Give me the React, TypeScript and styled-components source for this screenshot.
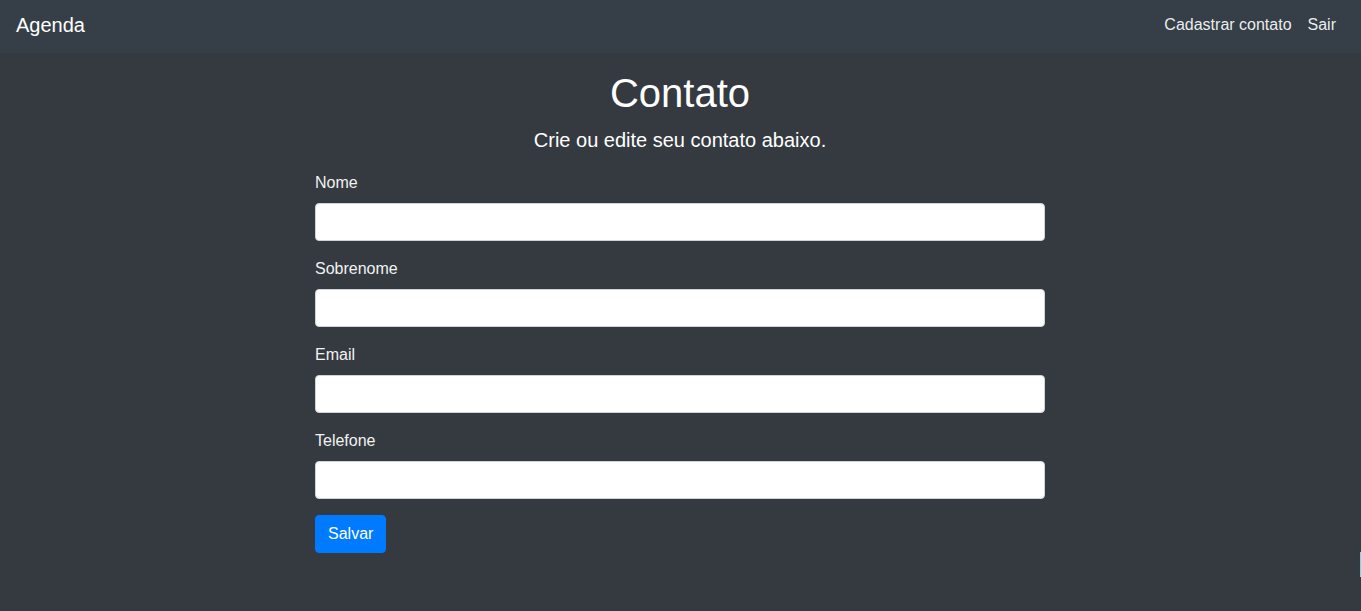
import React from "react";
import styled, { createGlobalStyle } from "styled-components";

const Global = createGlobalStyle`
  html, body { margin: 0; padding: 0; }
  body {
    background: #343a40;
    font-family: "Liberation Sans", Arial, sans-serif;
    font-size: 16px;
    line-height: 1.5;
    color: #fff;
    min-height: 611px;
    overflow: hidden;
  }
  * { box-sizing: border-box; }
`;

const Page = styled.div`
  position: relative;
  min-height: 611px;
`;

const Navbar = styled.nav`
  height: 53px;
  background: #363f48;
  display: flex;
  align-items: center;
  justify-content: space-between;
  padding: 0 17px 0 16px;
`;

const Brand = styled.a`
  font-size: 20px;
  line-height: 30px;
  color: #fff;
  text-decoration: none;
  margin-top: -3px;
`;

const NavLinks = styled.div`
  display: flex;
  margin-top: -3px;
`;

const NavLink = styled.a`
  font-size: 16px;
  line-height: 24px;
  padding: 0 8px;
  color: rgba(255, 255, 255, 0.92);
  text-decoration: none;
`;

const Main = styled.main`
  width: 731px;
  margin: 0 auto;
  padding: 16px 1px 0 0;
`;

const Title = styled.h1`
  margin: 0 0 8px;
  font-size: 40px;
  font-weight: 400;
  line-height: 48px;
  text-align: center;
`;

const Lead = styled.p`
  margin: 0 0 16px;
  font-size: 20px;
  line-height: 30px;
  text-align: center;
`;

const Form = styled.form`
  display: flex;
  flex-direction: column;
`;

const Group = styled.div`
  display: flex;
  flex-direction: column;
  margin-bottom: 16px;
`;

const Label = styled.label`
  font-size: 16px;
  line-height: 24px;
  margin-bottom: 8px;
  color: #f2f2f2;
`;

const Input = styled.input`
  height: 38px;
  width: 100%;
  border: 1px solid #ced4da;
  border-radius: 4px;
  background: #fff;
  padding: 6px 12px;
  font-size: 16px;
  font-family: inherit;
`;

const Button = styled.button`
  align-self: flex-start;
  height: 38px;
  padding: 6px 12px;
  background: #007bff;
  border: 1px solid #007bff;
  border-radius: 4px;
  color: #fff;
  font-size: 16px;
  line-height: 24px;
  font-family: inherit;
`;

const EdgeMark = styled.div`
  position: absolute;
  right: 0;
  top: 552px;
  width: 1px;
  height: 25px;
  background: #7fd8e8;
`;

const fields = ["Nome", "Sobrenome", "Email", "Telefone"];

export default function App() {
  return (
    <Page>
      <Global />
      <Navbar>
        <Brand href="#">Agenda</Brand>
        <NavLinks>
          <NavLink href="#">Cadastrar contato</NavLink>
          <NavLink href="#">Sair</NavLink>
        </NavLinks>
      </Navbar>
      <Main>
        <Title>Contato</Title>
        <Lead>Crie ou edite seu contato abaixo.</Lead>
        <Form onSubmit={(e) => e.preventDefault()}>
          {fields.map((f) => (
            <Group key={f}>
              <Label>{f}</Label>
              <Input type="text" />
            </Group>
          ))}
          <Button type="submit">Salvar</Button>
        </Form>
      </Main>
      <EdgeMark />
    </Page>
  );
}
